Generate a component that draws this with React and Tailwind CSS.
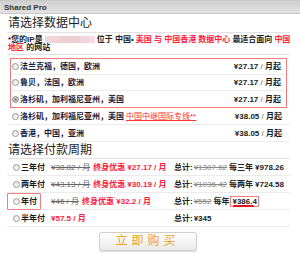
const dataCenters = [
  { name: "法兰克福，德国，欧洲", price: "¥27.17" },
  { name: "鲁贝，法国，欧洲", price: "¥27.17" },
  { name: "洛杉矶，加利福尼亚州，美国", price: "¥27.17", checked: true },
  { name: "洛杉矶，加利福尼亚州，美国", price: "¥38.05", note: "中国中继国际专线**" },
  { name: "香港，中国，亚洲", price: "¥38.05" },
];

const Radio = ({ checked }) => (
  <span
    className={
      "inline-block w-[7px] h-[7px] rounded-full border border-[#9a9a9a] shrink-0 " +
      (checked ? "bg-[#8a8a8a] shadow-[inset_0_0_0_1px_#ddd]" : "bg-gradient-to-b from-[#e6e6e6] to-[#fafafa]")
    }
  />
);

const DcRow = ({ dc, last }) => (
  <div className={"flex items-center h-[16px] pl-[1px] pr-[5px] " + (last ? "" : "border-b border-[#ececec]")}>
    <Radio checked={dc.checked} />
    <span className="ml-[1px] font-bold text-[#1a1a3a]">{dc.name}</span>
    {dc.note && <span className="ml-[2px] text-[#ff3030] underline font-normal">{dc.note}</span>}
    <span className="ml-auto font-bold text-[#1a1a1a]">
      {dc.price} <span className="text-[#666] font-normal">/</span> 月起
    </span>
  </div>
);

const periods = [
  { label: "三年付", old: "¥38.82 / 月", deal: "终身优惠 ¥27.17 / 月", oldTotal: "¥1307.62", unit: "每三年", total: "¥978.26" },
  { label: "两年付", old: "¥43.13 / 月", deal: "终身优惠 ¥30.19 / 月", oldTotal: "¥1036.42", unit: "每两年", total: "¥724.58" },
  { label: "年付", old: "¥46 / 月", deal: "终身优惠 ¥32.2 / 月", oldTotal: "¥552", unit: "每年", total: "¥386.4", marked: true },
  { label: "半年付", deal: "¥57.5 / 月", total: "¥345" },
];

const PeriodRow = ({ p }) => (
  <div className="flex items-center h-[17px] border-b border-[#ececec] font-bold">
    <div className="w-[44px] shrink-0 flex">
      <div
        className={
          "flex items-center h-[17px] pl-[5px] pr-[3px] " +
          (p.marked ? "border border-[#f08080] rounded-[1px]" : "border border-transparent")
        }
      >
        <Radio />
        <span className="ml-[1px] text-[#1a1a1a]">{p.label}</span>
      </div>
    </div>
    <div className="w-[123px] shrink-0 flex items-center">
      {p.old && <span className="line-through text-[#666] font-normal mr-[3px]">{p.old}</span>}
      <span className="text-[#ff2040]">{p.deal}</span>
    </div>
    <div className="flex items-center text-[#222]">
      <span>总计:</span>
      {p.oldTotal ? (
        <>
          <span className="line-through text-[#888] font-normal ml-[1px]">{p.oldTotal}</span>
          <span className="ml-[2px]">{p.unit}</span>
          {p.marked ? (
            <span className="relative ml-[1px] px-[1px] border border-[#f08080]">
              {p.total}
              <span className="absolute left-[2px] right-[4px] bottom-[-1px] h-[2px] bg-[#e0101a] rounded-full" />
            </span>
          ) : (
            <span className="ml-[2px]">{p.total}</span>
          )}
        </>
      ) : (
        <span className="ml-[1px]">{p.total}</span>
      )}
    </div>
  </div>
);

function App() {
  return (
    <div
      className="w-[300px] h-[254px] bg-white overflow-hidden text-[8px] leading-[9px] text-[#222]"
      style={{ fontFamily: '"Liberation Sans", "Noto Sans CJK SC", sans-serif' }}
    >
      <div className="h-[14px] bg-gradient-to-b from-[#cfcfcf] to-[#e2e2e2] border-t border-[#9a9a9a] border-b border-[#c8c8c8] flex items-center px-[4px]">
        <span className="text-[8px] font-bold text-[#333]">Shared Pro</span>
      </div>
      <div className="pl-[7px] pr-[10px]">
        <div className="h-[19px] flex items-center border-b border-[#e2e2e2] text-[12px] text-[#222] pl-[1px]">
          请选择数据中心
        </div>
        <div className="h-[22px] pt-[3px] border-b border-[#e2e2e2] font-bold leading-[7px] pl-[1px]">
          <div className="flex items-center whitespace-nowrap">
            <span>*您的IP是</span>
            <span className="w-[50px] h-[7px] bg-gradient-to-r from-[#f4d8dc] via-[#eacbd0] to-[#f6dce0] mx-[2px] shrink-0" />
            <span>位于 中国•</span>
            <span className="text-[#ff2040] ml-[2px]">美国 与 中国香港 数据中心</span>
            <span className="ml-[2px]">最适合面向</span>
            <span className="text-[#ff2040] ml-[2px]">中国</span>
          </div>
          <div className="mt-[1px]">
            <span className="text-[#ff2040]">地区</span> 的网站
          </div>
        </div>
        <div className="mt-[3px] pl-[3px]">
          <div className="border border-[#f07a7a] mr-[3px]">
            {dataCenters.slice(0, 3).map((dc, i) => (
              <DcRow key={i} dc={dc} last={i === 2} />
            ))}
          </div>
          {dataCenters.slice(3).map((dc, i) => (
            <div key={i} className="border-b border-[#ececec] pl-[1px] pr-[3px]">
              <DcRow dc={dc} last />
            </div>
          ))}
        </div>
        <div className="h-[17px] flex items-center text-[12px] text-[#222] pl-[1px] border-b border-[#e2e2e2]">
          请选择付款周期
        </div>
        <div>
          {periods.map((p, i) => (
            <PeriodRow key={i} p={p} />
          ))}
        </div>
        <div className="flex justify-center mt-[5px] pr-[2px]">
          <button className="w-[98px] h-[19px] rounded-[3px] border border-[#cfcfcf] bg-gradient-to-b from-white to-[#e9e9e9] shadow-[0_1px_1px_rgba(0,0,0,0.15)] text-[#f0a020] text-[12px] tracking-[4px] flex items-center justify-center">
            立即购买
          </button>
        </div>
      </div>
    </div>
  );
}

export default App;
